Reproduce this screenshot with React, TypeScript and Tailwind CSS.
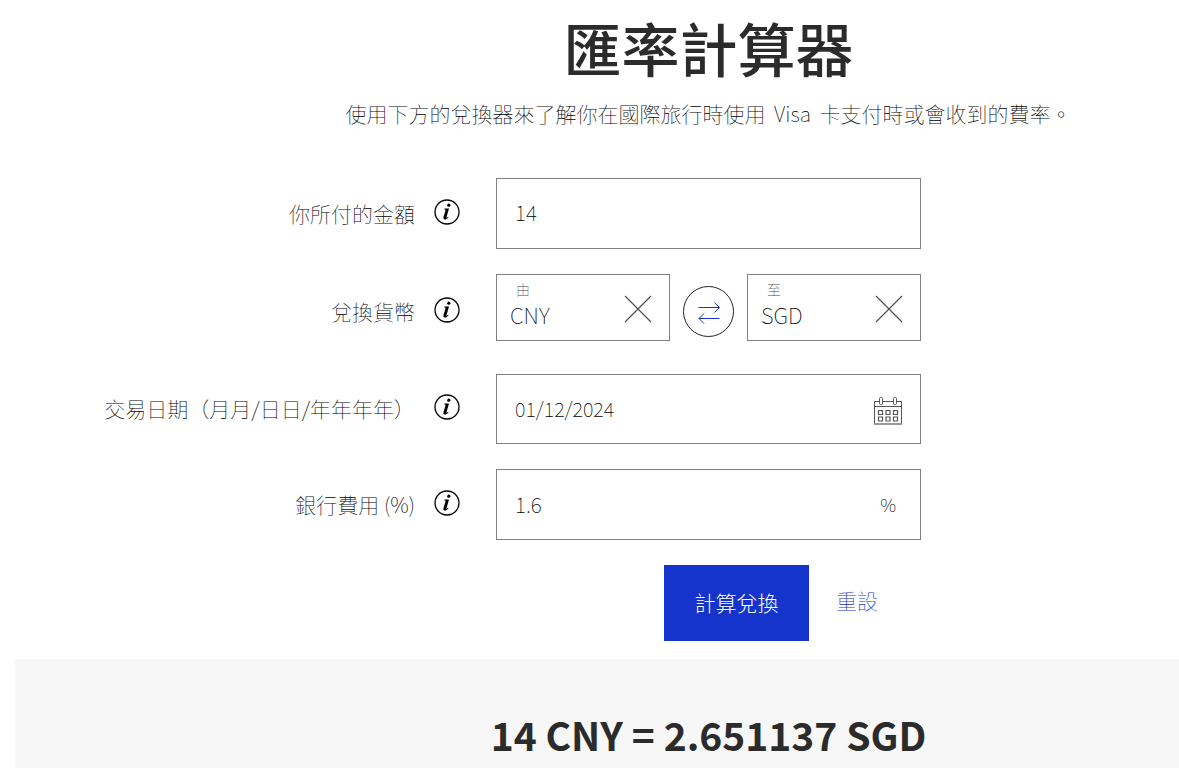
import { useState } from "react";

interface InfoLabelProps {
  text: string;
  htmlFor: string;
}

const InfoIcon = () => (
  <svg width="26" height="26" viewBox="0 0 26 26" fill="none">
    <circle cx="13" cy="13" r="12" stroke="#000" strokeWidth="1.3" />
    <circle cx="14.8" cy="6.2" r="1.6" fill="#000" />
    <path
      d="M10.4 9.6h4.6l-2.5 8.6c-.2.8.4.8 1.6-.5l.5.5c-1.4 1.8-2.5 2.3-3.5 2.3-1.5 0-2-.9-1.6-2.4l1.9-6.4c.2-.8 0-1-1-1.1z"
      fill="#000"
    />
  </svg>
);

const CloseIcon = () => (
  <svg width="28" height="28" viewBox="0 0 28 28" fill="none">
    <path d="M1 1l26 26M27 1L1 27" stroke="#4b4b4b" strokeWidth="1.1" />
  </svg>
);

const SwapIcon = () => (
  <svg width="24" height="24" viewBox="0 0 24 24" fill="none">
    <path
      d="M1.5 7.5h21M17.5 2.5l5 5-5 5M22.5 18.5H2M7 13.5l-5 5 5 5"
      stroke="#1a34cc"
    />
  </svg>
);

const CalendarIcon = () => (
  <svg width="28" height="28" viewBox="0 0 28 28" fill="none" stroke="#555">
    <path d="M5 4.5H.5V27M9 4.5h10M23 4.5h4.5V27M.5 9.5h27" />
    <path d="M0 27h28" stroke="#999" strokeWidth="2" />
    <rect x="5.5" y=".5" width="3" height="7" rx="1" />
    <rect x="19.5" y=".5" width="3" height="7" rx="1" />
    <path
      d="M4.5 13.5h4v4h-4zM12 13.5h4v4h-4zM19.5 13.5h4v4h-4zM4.5 20h4v4h-4zM12 20h4v4h-4zM19.5 20h4v4h-4z"
      strokeWidth="1.2"
    />
  </svg>
);

const InfoLabel: React.FC<InfoLabelProps> = ({ text, htmlFor }) => (
  <div className="flex items-center justify-end gap-[19px]">
    <label htmlFor={htmlFor} className="pb-0.5 text-[21px] leading-7">
      {text}
    </label>
    <button type="button" aria-label={`${text} 說明`} className="mb-1">
      <InfoIcon />
    </button>
  </div>
);

interface CurrencyBoxProps {
  id: string;
  label: string;
  value: string;
  onChange: (value: string) => void;
}

const CurrencyBox: React.FC<CurrencyBoxProps> = ({
  id,
  label,
  value,
  onChange,
}) => (
  <div className="flex h-[67px] min-w-0 flex-1 items-center self-start border border-[#808080] pr-[17px] pl-[13px]">
    <div className="min-w-0 flex-1 pb-1.5">
      <label htmlFor={id} className="block pl-1.5 text-sm leading-5 text-[#444]">
        {label}
      </label>
      <input
        id={id}
        value={value}
        onChange={(e) => onChange(e.target.value)}
        className="block h-8 w-full text-[22px] outline-none"
      />
    </div>
    <button
      type="button"
      aria-label="清除"
      onClick={() => onChange("")}
      className="pt-0.5"
    >
      <CloseIcon />
    </button>
  </div>
);

const App = () => {
  const [amount, setAmount] = useState("14");
  const [from, setFrom] = useState("CNY");
  const [to, setTo] = useState("SGD");
  const [date, setDate] = useState("01/12/2024");
  const [fee, setFee] = useState("1.6");

  const handleSwap = () => {
    setFrom(to);
    setTo(from);
  };

  const handleReset = () => {
    setAmount("");
    setFee("");
  };

  return (
    <main className="bg-white pl-[15px] font-['Noto_Sans_CJK_TC',sans-serif] font-thin text-black">
      <header className="pt-1 pl-[223px] text-center">
        <h1 className="text-[58px] leading-[86px] font-medium text-[#2b2b2b]">
          匯率計算器
        </h1>
        <p className="mt-[9px] text-[21px] leading-7">
          使用下方的兌換器來了解你在國際旅行時使用
          <span className="px-1"> Visa </span>
          卡支付時或會收到的費率。
        </p>
      </header>

      <form
        className="mt-[51px] flex flex-col gap-[25px]"
        onSubmit={(e) => e.preventDefault()}
      >
        <div className="grid grid-cols-[445px_minmax(0,425px)] gap-x-9 gap-y-[25px]">
          <InfoLabel text="你所付的金額" htmlFor="amount" />
          <input
            id="amount"
            value={amount}
            onChange={(e) => setAmount(e.target.value)}
            className="h-[71px] w-full border border-[#808080] px-[18px] pb-1 text-[21px] outline-none"
          />

          <InfoLabel text="兌換貨幣" htmlFor="from" />
          <div className="flex h-[75px] items-center gap-[13px]">
            <CurrencyBox id="from" label="由" value={from} onChange={setFrom} />
            <button
              type="button"
              aria-label="對調貨幣"
              onClick={handleSwap}
              className="flex size-[51px] items-center justify-center rounded-full border border-[#222]"
            >
              <SwapIcon />
            </button>
            <CurrencyBox id="to" label="至" value={to} onChange={setTo} />
          </div>

          <InfoLabel text="交易日期（月月/日日/年年年年）" htmlFor="date" />
          <div className="flex h-[70px] items-center border border-[#808080] px-[18px]">
            <input
              id="date"
              value={date}
              onChange={(e) => setDate(e.target.value)}
              className="h-full min-w-0 flex-1 pb-0.5 text-[20px] outline-none"
            />
            <button type="button" aria-label="選擇日期" className="pt-1">
              <CalendarIcon />
            </button>
          </div>

          <InfoLabel text="銀行費用 (%)" htmlFor="fee" />
          <div className="flex h-[71px] items-center border border-[#808080] pr-6 pl-[18px]">
            <input
              id="fee"
              value={fee}
              onChange={(e) => setFee(e.target.value)}
              className="h-full min-w-0 flex-1 pb-0.5 text-[21px] outline-none"
            />
            <span className="text-[18px]">%</span>
          </div>
        </div>

        <div className="flex gap-[27px] pl-[649px]">
          <button
            type="submit"
            className="h-[76px] w-[145px] bg-[#1434cb] text-[21px] font-light text-white"
          >
            計算兌換
          </button>
          <button
            type="button"
            onClick={handleReset}
            className="h-[72px] text-[21px] text-[#1434cb]"
          >
            重設
          </button>
        </div>
      </form>

      <section className="mt-[18px] bg-[#f7f7f7] pt-[47px] pl-[223px] text-center">
        <h2 className="h-[62px] text-[39px] leading-[56px] font-bold text-[#2b2b2b]">
          14 CNY = 2.651137 SGD
        </h2>
      </section>
    </main>
  );
};

export default App;
